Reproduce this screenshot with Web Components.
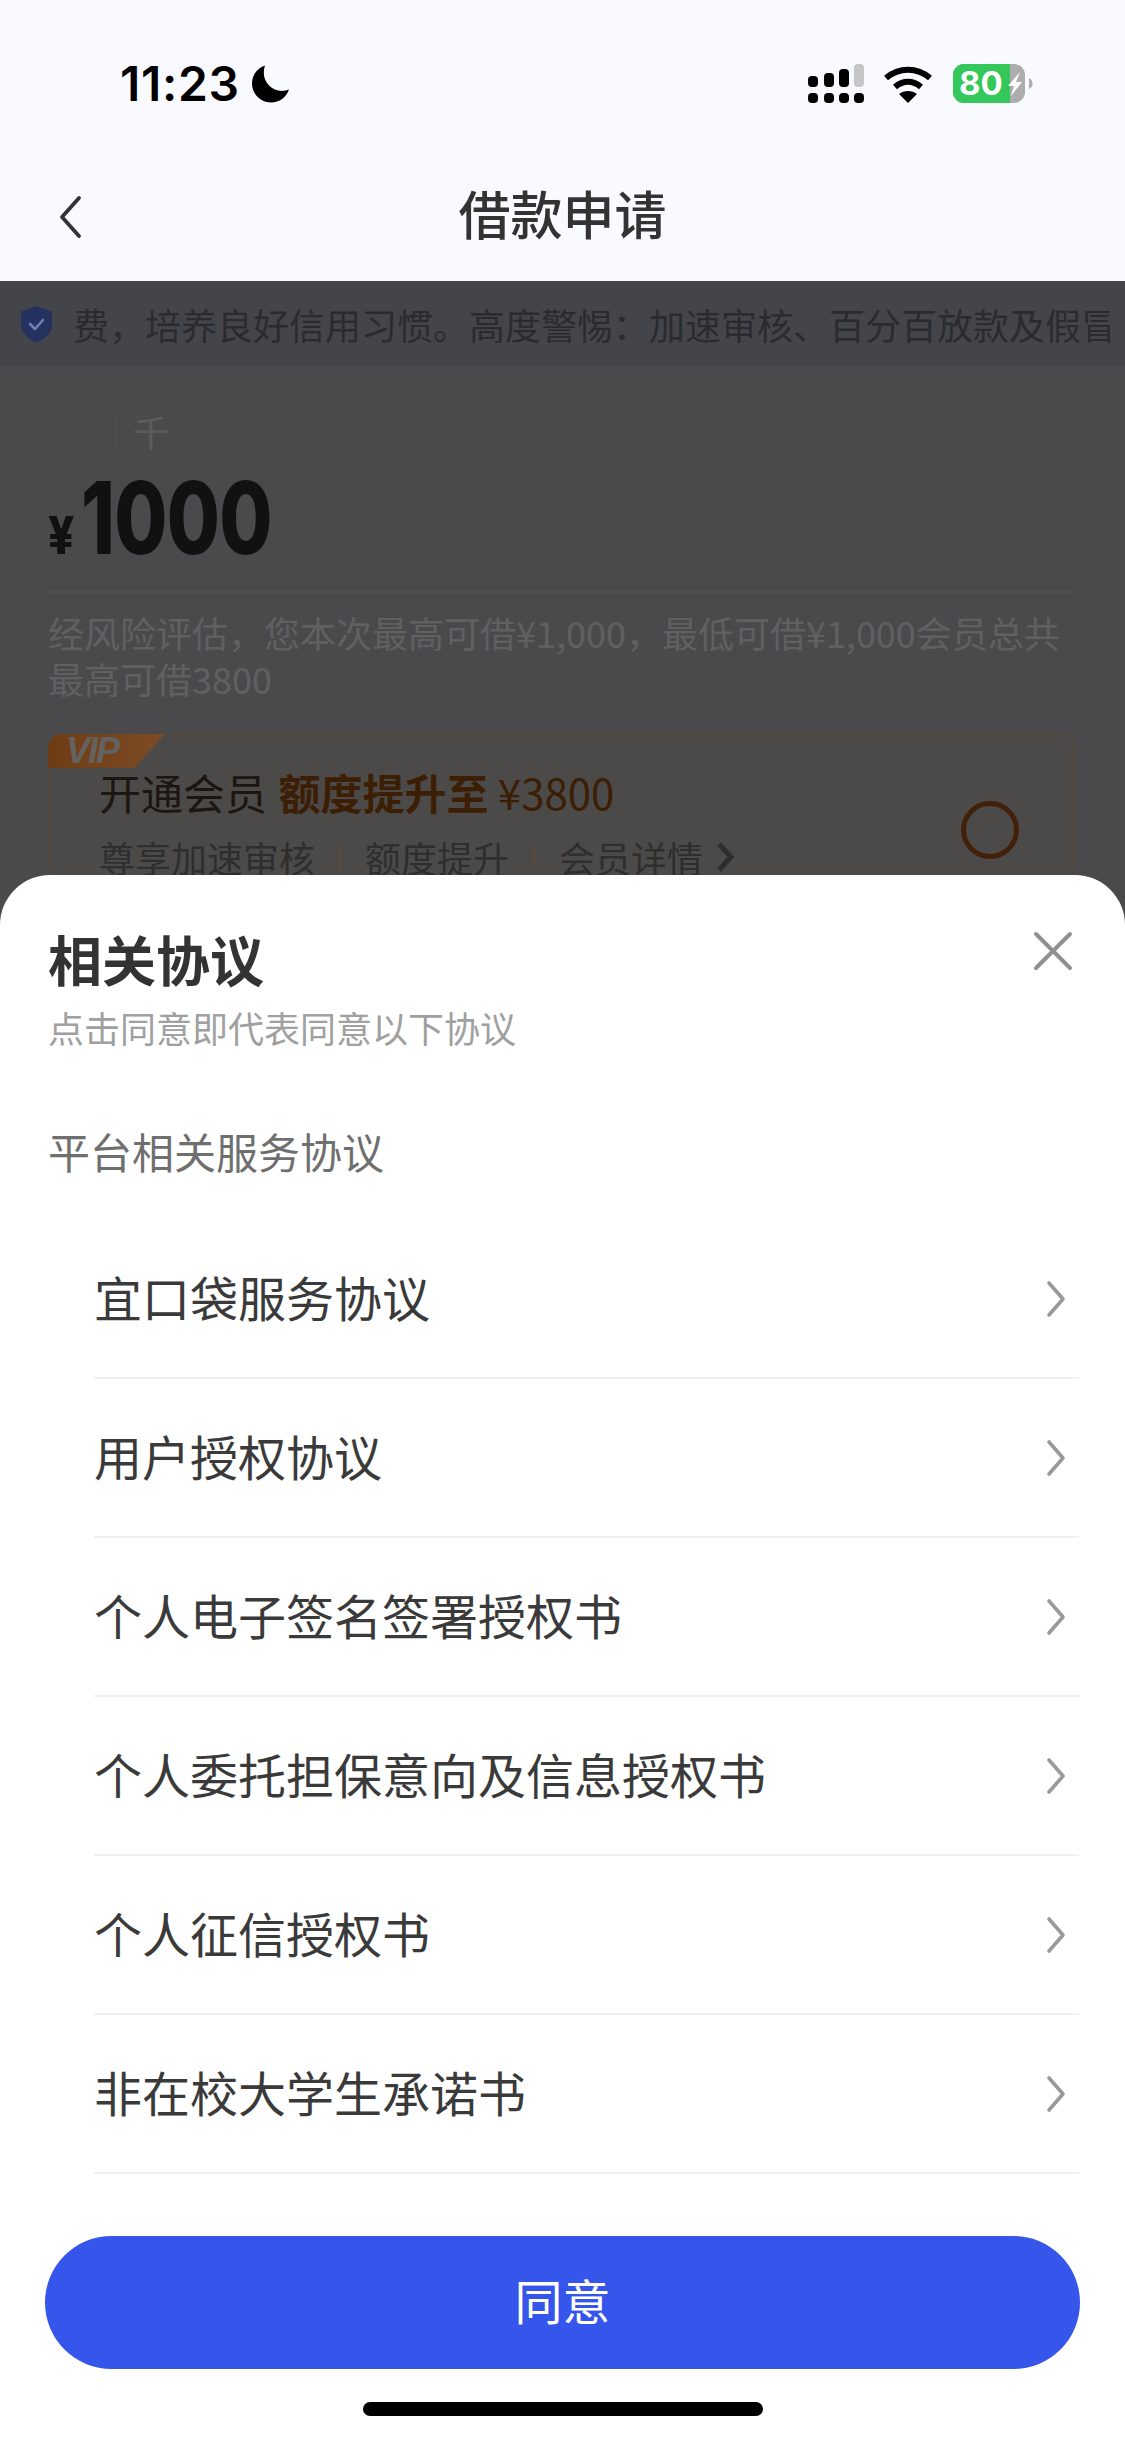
<!DOCTYPE html>
<html lang="zh-CN">
<head>
<meta charset="utf-8">
<title>借款申请</title>
<style>
html,body{margin:0;padding:0;background:#f9faff}
body{font-family:"Noto Sans CJK SC","Noto Sans",sans-serif;width:1125px;height:2439px;overflow:hidden}
</style>
</head>
<body>
<app-screen>
  <status-bar slot="top"></status-bar>
  <nav-bar slot="top">借款申请</nav-bar>
  <notice-bar>费&#65292;培养良好信用习惯。高度警惕&#65306;加速审核、百分百放款及假冒</notice-bar>
  <amount-panel></amount-panel>
  <vip-card></vip-card>
  <agreement-sheet slot="sheet">
    <agreement-row>宜口袋服务协议</agreement-row>
    <agreement-row>用户授权协议</agreement-row>
    <agreement-row>个人电子签名签署授权书</agreement-row>
    <agreement-row>个人委托担保意向及信息授权书</agreement-row>
    <agreement-row>个人征信授权书</agreement-row>
    <agreement-row>非在校大学生承诺书</agreement-row>
  </agreement-sheet>
</app-screen>
<script>
const FONT='"Noto Sans CJK SC","Noto Sans",sans-serif';
function def(name,html){
  customElements.define(name,class extends HTMLElement{
    constructor(){super();this.attachShadow({mode:'open'}).innerHTML=html;}
  });
}
def('app-screen',`<style>
:host{display:block;position:relative;width:1125px;height:2439px;overflow:hidden;background:#4a4a4c;font-family:${FONT}}
.top{display:block;background:#f9faff;height:281px}
</style>
<div class="top"><slot name="top"></slot></div>
<slot></slot>
<slot name="sheet"></slot>`);

def('status-bar',`<style>
:host{display:flex;justify-content:space-between;align-items:flex-start;height:140px;box-sizing:border-box;padding:60px 85px 0 120px}
.l{display:flex;align-items:center;gap:12px;height:48px}
.t{font:600 48px/48px Inter,"Liberation Sans",sans-serif;color:#000;letter-spacing:.7px}
.r{display:flex;align-items:flex-start}
svg{display:block}
.batt{font:700 33px/39px Inter,"Liberation Sans",sans-serif;fill:#fff}
</style>
<div class="l"><span class="t">11:23</span>
<svg width="38" height="38" viewBox="0 0 38 38"><path d="M13 .5C5.200 3 0 10.200 0 18.500 0 29 8.500 37.500 19 37.500c8.300 0 15.500-5.300 18-13-2.200.9-4.600 1.400-7.100 1.400C19.900 25.900 11.800 17.800 11.800 7.800c0-2.500.4-5 1.200-7.300z" fill="#000"/></svg></div>
<div class="r">
<svg width="232" height="44" viewBox="0 0 232 44">
 <g fill="#000">
  <rect x="0" y="16" width="10" height="11" rx="4"/><rect x="16" y="13" width="10" height="14" rx="4"/><rect x="31" y="9" width="10" height="18" rx="4"/>
  <rect x="0" y="33" width="10" height="10" rx="4"/><rect x="16" y="33" width="10" height="10" rx="4"/><rect x="31" y="33" width="10" height="10" rx="4"/><rect x="46" y="33" width="10" height="10" rx="4"/>
 </g>
 <rect x="46" y="4" width="10" height="23" rx="4" fill="#c6c6c8"/>
 <g fill="none" stroke="#000" stroke-width="6">
  <path d="M78 18C91 7 109 7 122 18"/>
  <path d="M87 27C95 20 105 20 113 27"/>
 </g>
 <path d="M91 34C96 30 104 30 109 34L100 43z" fill="#000"/>
 <rect x="145" y="4" width="72" height="39" rx="11" fill="#adadb0"/>
 <path d="M156 4h46v39h-46a11 11 0 0 1-11-11V15a11 11 0 0 1 11-11z" fill="#34c759"/>
 <path d="M221 18c2.500 1 3.500 3 3.500 5.500s-1 4.500-3.500 5.500z" fill="#adadb0"/>
 <text x="151" y="35" class="batt">80</text>
 <path d="M212 12l-12 14h6l-3 10 11-14h-6l4-10z" fill="#fff"/>
</svg>
</div>`);

def('nav-bar',`<style>
:host{display:flex;align-items:center;justify-content:center;position:relative;height:141px;padding-top:4px;box-sizing:border-box}
.b{position:absolute;left:58px;top:55px;display:block}
.t{font:500 52px/64px ${FONT};color:#333}
</style>
<svg class="b" width="24" height="44" viewBox="0 0 24 44"><path d="M21 3L4 22l17 19" fill="none" stroke="#333" stroke-width="3.800" stroke-linecap="round" stroke-linejoin="round"/></svg>
<span class="t"><slot></slot></span>`);

def('notice-bar',`<style>
:host{display:flex;align-items:center;height:85px;box-sizing:border-box;background:#44454b;padding:0 15px 0 20px;gap:20px}
svg{flex:none;display:block}
.t{flex:1;overflow:hidden;white-space:nowrap;font:400 36px/50px ${FONT};color:#2a2b31}
</style>
<svg width="33" height="38" viewBox="0 0 33 38"><path d="M16.500 1L32 6.500v13c0 8-6 14-15.500 18C7 33.500 1 27.500 1 19.500v-13z" fill="#25315f"/><path d="M10 19l5 5 8-9" fill="none" stroke="#6f7fb4" stroke-width="2.600" stroke-linecap="round" stroke-linejoin="round"/></svg>
<div class="t"><slot></slot></div>`);

def('amount-panel',`<style>
:host{display:block;padding:40px 50px 0 48px}
.q{display:flex;align-items:center;height:50px}
.c{width:1px;height:40px;background:#4f4f51;margin-left:69px}
.k{font:400 36px/50px ${FONT};color:#5c5c5e;margin-left:15px}
.a{display:flex;align-items:baseline;height:132px;padding-top:3px;border-bottom:2px solid #505052;line-height:118px}
.y{font:800 52px/118px Inter,"Liberation Sans",sans-serif;color:#111;width:33px;flex:none;transform:scaleX(.88);transform-origin:left}
.n{font:800 100px/118px Inter,"Liberation Sans",sans-serif;color:#111;display:inline-block;transform:scaleX(.77);transform-origin:left;letter-spacing:-1px}
.d{margin:16px 0 0;font:400 36px/46px ${FONT};color:#606062}
</style>
<div class="q"><span class="c"></span><span class="k">千</span></div>
<div class="a"><span class="y">¥</span><span class="n">1000</span></div>
<p class="d">经风险评估&#65292;您本次最高可借¥1,000&#65292;最低可借¥1,000会员总共最高可借3800</p>`);

def('vip-card',`<style>
:host{display:flex;justify-content:space-between;align-items:flex-start;position:relative;margin:33px 50px 0 48px;padding:28px 54px 0 49px;background:#4b4a48;border:2px solid #50483f;border-radius:14px;box-sizing:border-box;height:200px}
.tag{position:absolute;left:-2px;top:-2px;width:117px;height:34px;background:linear-gradient(90deg,#6e3c14,#7c4c26);clip-path:polygon(0 0,100% 0,74% 100%,0 100%);border-top-left-radius:14px;font:italic 700 36px/34px "Liberation Sans",sans-serif;color:#646260;padding-left:18px;box-sizing:border-box;letter-spacing:-2px}
.h{font:400 42px/56px ${FONT};color:#1c1510;white-space:nowrap}
.h b{font-weight:600;color:#3c1e05;margin-left:2px}
.h i{font-style:normal;color:#3c1e05}
.s{display:flex;align-items:center;margin-top:12px;font:400 36px/50px ${FONT};color:#2e2e2f;white-space:nowrap}
.s u{text-decoration:none;width:2px;height:24px;background:#5c4a38;margin:4px 24px 0}
.s svg{margin-left:12px}
.o{width:58px;height:58px;border:5px solid #43200a;border-radius:50%;box-sizing:border-box;flex:none;align-self:center;margin-top:-36px}
</style>
<div class="tag">VIP</div>
<div>
 <div class="h">开通会员 <b>额度提升至</b> <i>¥3800</i></div>
 <div class="s">尊享加速审核<u></u>额度提升<u></u>会员详情<svg width="20" height="32" viewBox="0 0 20 32"><path d="M4 3l12 13L4 29" fill="none" stroke="#2e2e2f" stroke-width="5"/></svg></div>
</div>
<div class="o"></div>`);

def('agreement-sheet',`<style>
:host{display:block;position:absolute;left:0;right:0;top:875px;bottom:0;background:#fff;border-radius:50px 50px 0 0;font-family:${FONT}}
.x{position:absolute;left:1033px;top:56px;display:block}
h2{margin:48px 0 0 48px;font:600 54px/72px ${FONT};color:#333}
.sub{margin:7px 0 0 48px;font:400 36px/50px ${FONT};color:#a0a0a0}
.lab{margin:69px 0 0 48px;font:400 42px/60px ${FONT};color:#6f6f6f}
.list{margin:39px 46px 0 94px}
.btn{margin:62px 0 0 45px;width:1035px;height:133px;box-sizing:border-box;padding-bottom:8px;border-radius:67px;background:#3555eb;color:#fff;display:flex;align-items:center;justify-content:center;font:400 48px/60px ${FONT}}
.home{margin:33px auto 0;width:400px;height:14px;border-radius:7px;background:#000}
</style>
<svg class="x" width="40" height="40" viewBox="0 0 40 40"><path d="M3 3l34 34M37 3L3 37" fill="none" stroke="#909090" stroke-width="4" stroke-linecap="round"/></svg>
<h2>相关协议</h2>
<div class="sub">点击同意即代表同意以下协议</div>
<div class="lab">平台相关服务协议</div>
<div class="list"><slot></slot></div>
<div class="btn">同意</div>
<div class="home"></div>`);

def('agreement-row',`<style>
:host{display:flex;align-items:center;justify-content:space-between;height:159px;box-sizing:border-box;padding:1px 13px 0 0;border-bottom:2px solid #f0f0f0;font:400 48px/64px ${FONT};color:#3a3a3a}
span{margin-bottom:6px}
svg{display:block}
</style>
<span><slot></slot></span>
<svg width="20" height="38" viewBox="0 0 20 38"><path d="M3 3l14 16L3 35" fill="none" stroke="#999" stroke-width="3.600" stroke-linecap="round" stroke-linejoin="round"/></svg>`);
</script>
</body>
</html>
